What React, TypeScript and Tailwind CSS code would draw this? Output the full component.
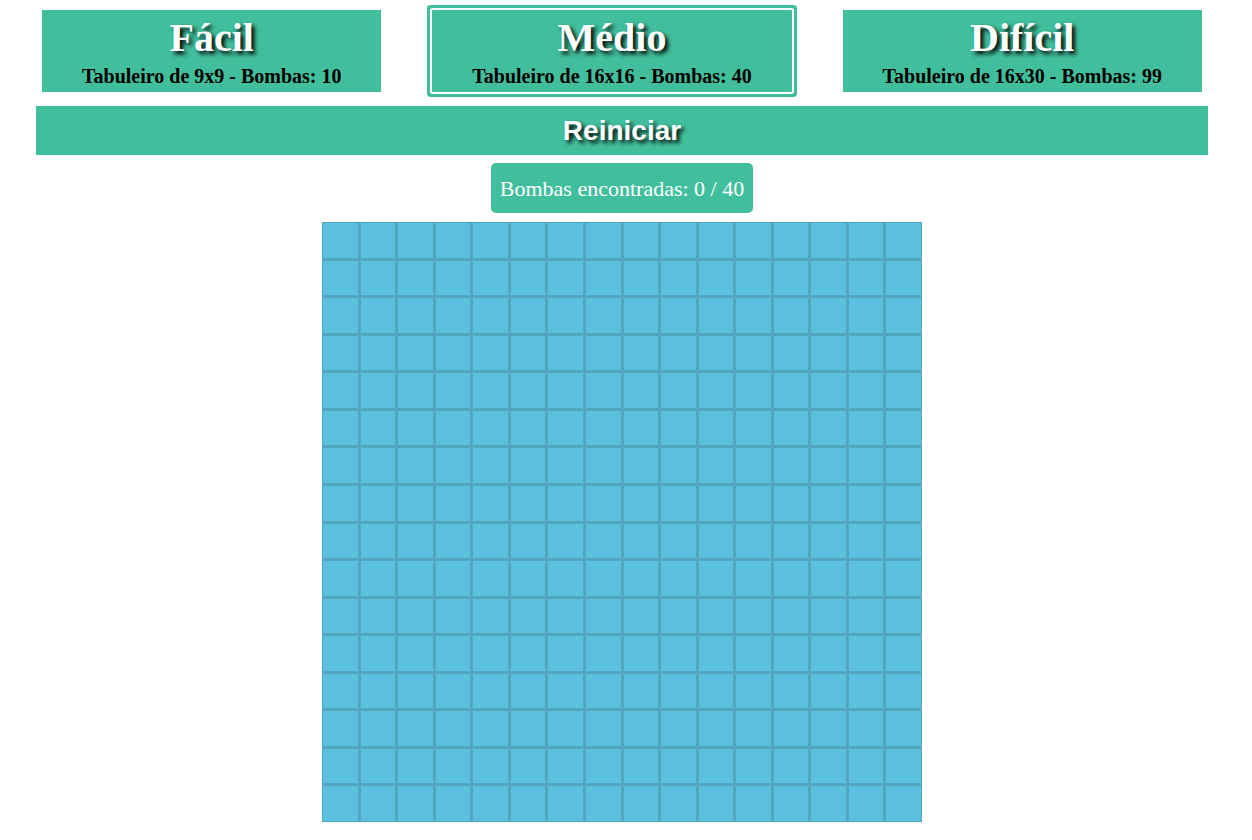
const levels = [
  { name: "Fácil", info: "Tabuleiro de 9x9 - Bombas: 10", selected: false },
  { name: "Médio", info: "Tabuleiro de 16x16 - Bombas: 40", selected: true },
  { name: "Difícil", info: "Tabuleiro de 16x30 - Bombas: 99", selected: false },
];

const cells = Array.from({ length: 16 * 16 }, (_, i) => i);

export default function App() {
  return (
    <div className="min-h-screen bg-white font-['Liberation_Serif',serif]">
      <div className="ml-[36px] w-[1172px] pt-[10px]">
        {/* NIVEIS */}
        <div className="flex items-start justify-between px-[6px]">
          {levels.map((l) => (
            <div
              key={l.name}
              className={
                l.selected
                  ? "h-[82px] rounded-[1px] bg-[#41bf9c] px-[40px] pt-[6px] text-center shadow-[0_0_0_2px_#ffffff,0_0_0_5px_#41bf9c]"
                  : "h-[82px] bg-[#41bf9c] px-[40px] pt-[6px] text-center"
              }
            >
              <h1 className="text-[40px] font-bold leading-[44px] text-white [text-shadow:3px_3px_4px_#000]">
                {l.name}
              </h1>
              <p className="mt-[5px] whitespace-nowrap text-[20px] font-bold leading-[23px] text-black">
                {l.info}
              </p>
            </div>
          ))}
        </div>

        {/* REINICIAR */}
        <button className="mt-[14px] flex h-[49px] w-full items-center justify-center bg-[#41bf9c] font-['Liberation_Sans',sans-serif] text-[28px] font-bold text-white [text-shadow:3px_3px_4px_#000]">
          Reiniciar
        </button>

        <div className="mt-[8px] flex justify-center">
          <div className="flex h-[50px] items-center rounded-[5px] bg-[#41bf9c] px-[9px] text-[22px] text-white">
            Bombas encontradas: 0 / 40
          </div>
        </div>

        {/* TABULEIRO */}
        <div className="mt-[9px] flex justify-center">
          <div className="grid h-[600px] w-[600px] grid-cols-16 gap-[3px] bg-[#53a6c0] p-[1px]">
            {cells.map((c) => (
              <div key={c} className="bg-[#5bc0de]" />
            ))}
          </div>
        </div>
      </div>
    </div>
  );
}
